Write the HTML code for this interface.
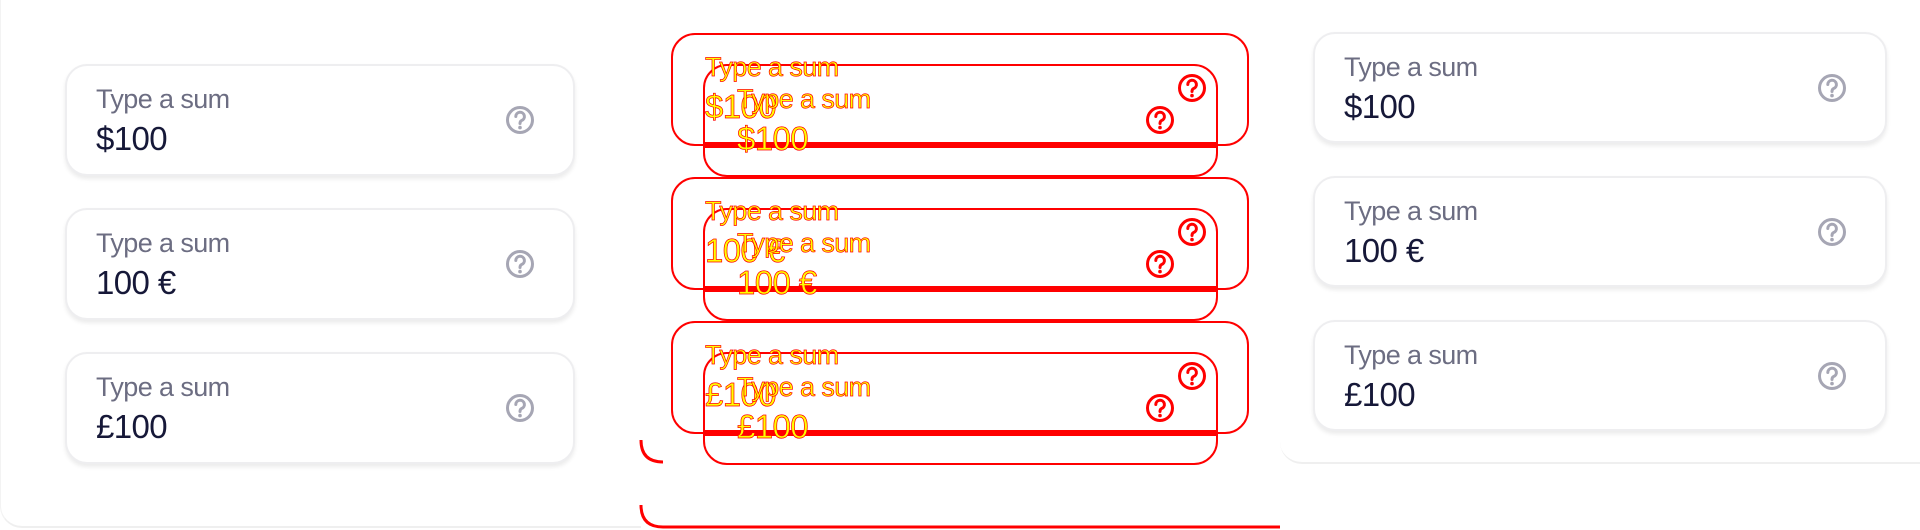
<!DOCTYPE html>
<html><head><meta charset="utf-8"><style>
html,body{margin:0;padding:0;background:#fff;width:1920px;height:530px;overflow:hidden;font-family:"Liberation Sans",sans-serif}
.abs{position:absolute}
.panel{position:absolute;background:#fff;border-bottom:2px solid #efefef}
.card{position:absolute;background:#fff;border:2px solid #eeeef0;border-radius:22px;box-shadow:0 3px 4px rgba(0,0,0,.08);box-sizing:border-box}
.lab{position:absolute;font-size:27px;color:#6c6d82;letter-spacing:-0.6px}
.val{position:absolute;font-size:33px;color:#161838;letter-spacing:-0.6px}
.ob{position:absolute;border:2px solid #f00;border-radius:24px;box-sizing:border-box}
.ot{position:absolute;color:#ff0;-webkit-text-stroke:0.7px #f00;font-size:27px;letter-spacing:-0.6px}
.ov{position:absolute;color:#ff0;-webkit-text-stroke:0.7px #f00;font-size:33px;letter-spacing:-0.6px}
.bar{position:absolute;height:6px;background:#f00}
</style></head><body>
<div class="panel" style="left:0;top:-20px;width:640px;height:546px;border-radius:0 0 0 22px;border-left:1px solid #f3f3f3"></div>
<div class="panel" style="left:1280px;top:-20px;width:640px;height:482px;border-radius:0 0 0 22px"></div>

<div class="card" style="left:65px;top:64px;width:510px;height:112px"></div>
<div class="lab" style="left:96px;top:84px">Type a sum</div>
<div class="val" style="left:96px;top:120px">$100</div>
<div class="card" style="left:65px;top:208px;width:510px;height:112px"></div>
<div class="lab" style="left:96px;top:228px">Type a sum</div>
<div class="val" style="left:96px;top:264px">100 €</div>
<div class="card" style="left:65px;top:352px;width:510px;height:112px"></div>
<div class="lab" style="left:96px;top:372px">Type a sum</div>
<div class="val" style="left:96px;top:408px">£100</div>

<div class="card" style="left:1313px;top:32px;width:574px;height:111px"></div>
<div class="lab" style="left:1344px;top:52px">Type a sum</div>
<div class="val" style="left:1344px;top:88px">$100</div>
<div class="card" style="left:1313px;top:176px;width:574px;height:111px"></div>
<div class="lab" style="left:1344px;top:196px">Type a sum</div>
<div class="val" style="left:1344px;top:232px">100 €</div>
<div class="card" style="left:1313px;top:320px;width:574px;height:111px"></div>
<div class="lab" style="left:1344px;top:340px">Type a sum</div>
<div class="val" style="left:1344px;top:376px">£100</div>

<svg class="abs" style="left:0;top:0" width="1920" height="530">
<defs><g id="q"><circle cx="0" cy="0" r="12.5" fill="none" stroke-width="3"/><path d="M-4.2,-3.5 A4.3,4.3 0 1 1 1.5,0.6 C0.2,1.3 0,2 0,3.5" fill="none" stroke-width="3" stroke-linecap="round"/><circle cx="0" cy="7.6" r="1.8" stroke="none"/></g></defs>
<g stroke="#a6a6b4" fill="#a6a6b4">
<use href="#q" x="520" y="120"/><use href="#q" x="520" y="264"/><use href="#q" x="520" y="408"/>
<use href="#q" x="1832" y="88"/><use href="#q" x="1832" y="232"/><use href="#q" x="1832" y="376"/>
</g>
<g stroke="#f00" fill="#f00">
<use href="#q" x="1192" y="88"/><use href="#q" x="1160" y="120"/>
<use href="#q" x="1192" y="232"/><use href="#q" x="1160" y="264"/>
<use href="#q" x="1192" y="376"/><use href="#q" x="1160" y="408"/>
</g>
<path d="M641,440 q0,22 22,22 M641,505 q0,22 22,22 L1280,527" stroke="#f00" stroke-width="3" fill="none"/>
</svg>

<div class="ob" style="left:671px;top:33px;width:578px;height:113px"></div>
<div class="ob" style="left:703px;top:64px;width:515px;height:113px"></div>
<div class="bar" style="left:704px;top:142px;width:513px"></div>
<div class="ot" style="left:705px;top:52px">Type a sum</div>
<div class="ov" style="left:705px;top:88px">$100</div>
<div class="ot" style="left:737px;top:84px">Type a sum</div>
<div class="ov" style="left:737px;top:120px">$100</div>

<div class="ob" style="left:671px;top:177px;width:578px;height:113px"></div>
<div class="ob" style="left:703px;top:208px;width:515px;height:113px"></div>
<div class="bar" style="left:704px;top:286px;width:513px"></div>
<div class="ot" style="left:705px;top:196px">Type a sum</div>
<div class="ov" style="left:705px;top:232px">100 €</div>
<div class="ot" style="left:737px;top:228px">Type a sum</div>
<div class="ov" style="left:737px;top:264px">100 €</div>

<div class="ob" style="left:671px;top:321px;width:578px;height:113px"></div>
<div class="ob" style="left:703px;top:352px;width:515px;height:113px"></div>
<div class="bar" style="left:704px;top:430px;width:513px"></div>
<div class="ot" style="left:705px;top:340px">Type a sum</div>
<div class="ov" style="left:705px;top:376px">£100</div>
<div class="ot" style="left:737px;top:372px">Type a sum</div>
<div class="ov" style="left:737px;top:408px">£100</div>
</body></html>
